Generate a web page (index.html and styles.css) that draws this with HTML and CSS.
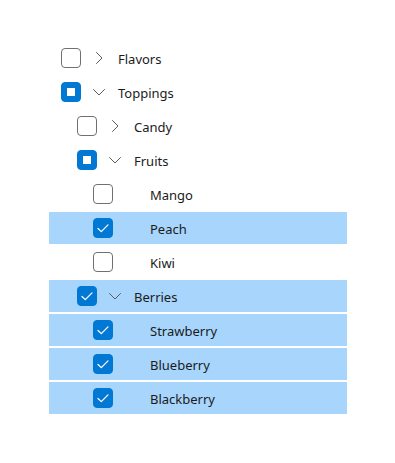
FILE: index.html
```html
<!DOCTYPE html>
<html lang="en">
<head>
<meta charset="utf-8">
<title>TreeView</title>
<link rel="stylesheet" href="styles.css">
</head>
<body>
<div class="tree">
  <div class="row lv0">
    <span class="cb"></span>
    <span class="chev"><svg viewBox="0 0 16 16" width="16" height="16"><path d="M5.5 2.5 L11 8 L5.5 13.5" /></svg></span>
    <span class="label">Flavors</span>
  </div>
  <div class="row lv0">
    <span class="cb ind"><span class="sq"></span></span>
    <span class="chev"><svg viewBox="0 0 16 16" width="16" height="16"><path d="M2.5 5.5 L8 11 L13.5 5.5" /></svg></span>
    <span class="label">Toppings</span>
  </div>
  <div class="row lv1">
    <span class="cb"></span>
    <span class="chev"><svg viewBox="0 0 16 16" width="16" height="16"><path d="M5.5 2.5 L11 8 L5.5 13.5" /></svg></span>
    <span class="label">Candy</span>
  </div>
  <div class="row lv1">
    <span class="cb ind"><span class="sq"></span></span>
    <span class="chev"><svg viewBox="0 0 16 16" width="16" height="16"><path d="M2.5 5.5 L8 11 L13.5 5.5" /></svg></span>
    <span class="label">Fruits</span>
  </div>
  <div class="row lv2">
    <span class="cb"></span>
    <span class="chev"></span>
    <span class="label">Mango</span>
  </div>
  <div class="row lv2 sel">
    <span class="cb on"><svg viewBox="0 0 20 20" width="20" height="20"><path d="M5 10.5 L8.3 13.6 L15 6.9" /></svg></span>
    <span class="chev"></span>
    <span class="label">Peach</span>
  </div>
  <div class="row lv2">
    <span class="cb"></span>
    <span class="chev"></span>
    <span class="label">Kiwi</span>
  </div>
  <div class="row lv1 sel">
    <span class="cb on"><svg viewBox="0 0 20 20" width="20" height="20"><path d="M5 10.5 L8.3 13.6 L15 6.9" /></svg></span>
    <span class="chev"><svg viewBox="0 0 16 16" width="16" height="16"><path d="M2.5 5.5 L8 11 L13.5 5.5" /></svg></span>
    <span class="label">Berries</span>
  </div>
  <div class="row lv2 sel">
    <span class="cb on"><svg viewBox="0 0 20 20" width="20" height="20"><path d="M5 10.5 L8.3 13.6 L15 6.9" /></svg></span>
    <span class="chev"></span>
    <span class="label">Strawberry</span>
  </div>
  <div class="row lv2 sel">
    <span class="cb on"><svg viewBox="0 0 20 20" width="20" height="20"><path d="M5 10.5 L8.3 13.6 L15 6.9" /></svg></span>
    <span class="chev"></span>
    <span class="label">Blueberry</span>
  </div>
  <div class="row lv2 sel">
    <span class="cb on"><svg viewBox="0 0 20 20" width="20" height="20"><path d="M5 10.5 L8.3 13.6 L15 6.9" /></svg></span>
    <span class="chev"></span>
    <span class="label">Blackberry</span>
  </div>
</div>
</body>
</html>
```
FILE: styles.css
```css
html, body {
  margin: 0;
  padding: 0;
  background: #ffffff;
}
body {
  font-family: "Noto Sans", "Open Sans", sans-serif;
  font-size: 13px;
  color: #1b1b1b;
}
.tree {
  display: flex;
  flex-direction: column;
  gap: 2px;
  width: 298px;
  margin: 42px 0 0 49px;
}
.row {
  display: flex;
  align-items: center;
  height: 32px;
  box-sizing: border-box;
}
.lv0 { padding-left: 12px; }
.lv1 { padding-left: 28px; }
.lv2 { padding-left: 44px; }
.sel { background: #a7d5fb; }
.cb {
  width: 20px;
  height: 20px;
  box-sizing: border-box;
  border: 1px solid #707070;
  border-radius: 4px;
  background: #ffffff;
  display: flex;
  align-items: center;
  justify-content: center;
  flex: none;
}
.cb.ind, .cb.on {
  background: #0078d4;
  border-color: #0078d4;
}
.cb .sq {
  width: 8px;
  height: 8px;
  background: #ffffff;
}
.cb svg {
  display: block;
  margin: -1px;
}
.cb svg path {
  fill: none;
  stroke: #ffffff;
  stroke-width: 1.3;
  stroke-linecap: round;
  stroke-linejoin: round;
}
.chev {
  width: 16px;
  height: 16px;
  margin-left: 10px;
  margin-right: 11px;
  flex: none;
}
.chev svg {
  display: block;
}
.chev svg path {
  fill: none;
  stroke: #5c5c5c;
  stroke-width: 1;
  stroke-linecap: round;
  stroke-linejoin: round;
}
.label {
  line-height: 20px;
  padding-top: 2px;
  white-space: nowrap;
}
```
